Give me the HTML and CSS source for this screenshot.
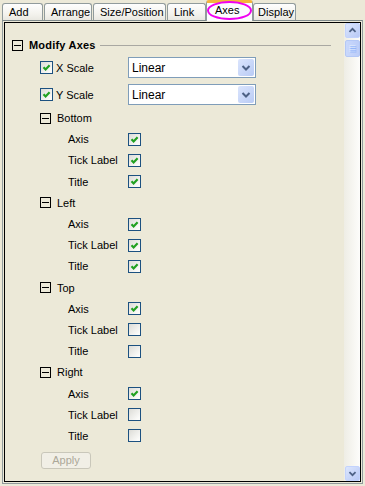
FILE: index.html
```html
<!doctype html>
<html lang="en">
<head>
<meta charset="utf-8">
<title>Modify Axes</title>
<link rel="stylesheet" href="styles.css">
</head>
<body>

<div class="tabs">
  <div class="tab t-add">Add</div>
  <div class="tab t-arrange">Arrange</div>
  <div class="tab t-size">Size/Position</div>
  <div class="tab t-link">Link</div>
  <div class="tab tab-active t-axes">Axes<span class="mark"></span></div>
  <div class="tab t-display">Display</div>
</div>

<div class="panel">
<div class="frame">
  <div class="content">
    <div class="section-head">
      <span class="toggle"></span>
      <span class="section-title">Modify Axes</span>
      <span class="rule"></span>
    </div>

    <div class="scale-row">
      <span class="check on"><svg viewBox="0 0 11 11"><polyline points="2.5,5.2 4.6,7.4 8.6,3.2"/></svg></span>
      <span class="scale-label">X Scale</span>
      <div class="combo"><span class="combo-text">Linear</span><span class="combo-btn"><svg viewBox="0 0 16 17"><polyline points="4.5,7 8,10.5 11.5,7"/></svg></span></div>
    </div>
    <div class="scale-row">
      <span class="check on"><svg viewBox="0 0 11 11"><polyline points="2.5,5.2 4.6,7.4 8.6,3.2"/></svg></span>
      <span class="scale-label">Y Scale</span>
      <div class="combo"><span class="combo-text">Linear</span><span class="combo-btn"><svg viewBox="0 0 16 17"><polyline points="4.5,7 8,10.5 11.5,7"/></svg></span></div>
    </div>

    <div class="tree">
      <div class="row node-head"><span class="toggle"></span>Bottom</div>
      <div class="row item"><span class="label">Axis</span><span class="check on"><svg viewBox="0 0 11 11"><polyline points="2.5,5.2 4.6,7.4 8.6,3.2"/></svg></span></div>
      <div class="row item"><span class="label">Tick Label</span><span class="check on"><svg viewBox="0 0 11 11"><polyline points="2.5,5.2 4.6,7.4 8.6,3.2"/></svg></span></div>
      <div class="row item"><span class="label">Title</span><span class="check on"><svg viewBox="0 0 11 11"><polyline points="2.5,5.2 4.6,7.4 8.6,3.2"/></svg></span></div>

      <div class="row node-head"><span class="toggle"></span>Left</div>
      <div class="row item"><span class="label">Axis</span><span class="check on"><svg viewBox="0 0 11 11"><polyline points="2.5,5.2 4.6,7.4 8.6,3.2"/></svg></span></div>
      <div class="row item"><span class="label">Tick Label</span><span class="check on"><svg viewBox="0 0 11 11"><polyline points="2.5,5.2 4.6,7.4 8.6,3.2"/></svg></span></div>
      <div class="row item"><span class="label">Title</span><span class="check on"><svg viewBox="0 0 11 11"><polyline points="2.5,5.2 4.6,7.4 8.6,3.2"/></svg></span></div>

      <div class="row node-head"><span class="toggle"></span>Top</div>
      <div class="row item"><span class="label">Axis</span><span class="check on"><svg viewBox="0 0 11 11"><polyline points="2.5,5.2 4.6,7.4 8.6,3.2"/></svg></span></div>
      <div class="row item"><span class="label">Tick Label</span><span class="check"></span></div>
      <div class="row item"><span class="label">Title</span><span class="check"></span></div>

      <div class="row node-head"><span class="toggle"></span>Right</div>
      <div class="row item"><span class="label">Axis</span><span class="check on"><svg viewBox="0 0 11 11"><polyline points="2.5,5.2 4.6,7.4 8.6,3.2"/></svg></span></div>
      <div class="row item"><span class="label">Tick Label</span><span class="check"></span></div>
      <div class="row item"><span class="label">Title</span><span class="check"></span></div>
    </div>

    <button class="apply" disabled>Apply</button>
  </div>

  <div class="scrollbar">
    <div class="sb-btn"><svg viewBox="0 0 15 15"><polyline points="4,9 7.5,5.5 11,9"/></svg></div>
    <div class="sb-thumb"><svg viewBox="0 0 15 17"><path class="grip-hi" d="M4 5.5h7M4 7.5h7M4 9.5h7M4 11.5h7"/><path class="grip-lo" d="M5 6.5h7M5 8.5h7M5 10.5h7M5 12.5h7"/></svg></div>
    <div class="sb-track"></div>
    <div class="sb-btn"><svg viewBox="0 0 15 15"><polyline points="4,6 7.5,9.5 11,6"/></svg></div>
  </div>
</div>
</div>

</body>
</html>
```

FILE: styles.css
```css
body {
  margin: 0;
  background: #ece9d8;
  font-family: "Liberation Sans", Arial, sans-serif;
  font-size: 11px;
  color: #000;
}

/* tab strip */
.tabs {
  display: flex;
  align-items: flex-end;
  height: 20px;
  padding-left: 2px;
}
.tab {
  position: relative;
  box-sizing: border-box;
  height: 17px;
  margin-right: 1px;
  padding-left: 6px;
  line-height: 16px;
  border: 1px solid #919b9c;
  border-bottom: none;
  border-radius: 3px 3px 0 0;
  background: linear-gradient(#fefefe, #f4f3ee 60%, #e9e8e1);
  white-space: nowrap;
}
.t-add { width: 41px; }
.t-arrange { width: 48px; }
.t-size { width: 73px; }
.t-link { width: 39px; }
.t-display { width: 43px; padding-left: 4px; }
.tab-active {
  z-index: 2;
  width: 47px;
  height: 21px;
  margin-left: -1px;
  margin-right: 0;
  margin-bottom: -1px;
  padding-left: 8px;
  line-height: 14px;
  border-top: 3px solid #f5b43c;
  background: #fcfcfe;
}
.mark {
  position: absolute;
  left: 0;
  top: -2px;
  width: 45px;
  height: 19px;
  box-sizing: border-box;
  border: 2px solid #f000f0;
  border-radius: 50%;
}

/* panel */
.panel {
  width: 361px;
  box-sizing: border-box;
  margin-left: 2px;
  padding: 1px;
  border: 1px solid #919b9c;
  border-top-color: #7f8a8b;
}
.frame {
  display: flex;
  height: 458px;
  border: 1px solid #000;
}
.content {
  flex: 1;
  padding-top: 16px;
}

.section-head {
  display: flex;
  align-items: center;
  height: 12px;
  padding-left: 7px;
  padding-right: 13px;
}
.toggle {
  position: relative;
  flex: none;
  width: 11px;
  height: 11px;
  box-sizing: border-box;
  border: 1px solid #000;
}
.toggle::after {
  content: "";
  position: absolute;
  left: 1px;
  right: 1px;
  top: 4px;
  height: 1px;
  background: #000;
}
.section-title {
  margin-left: 6px;
  font-weight: bold;
  letter-spacing: 0.2px;
}
.rule {
  flex: 1;
  height: 1px;
  margin-left: 4px;
  background: #a9a8a2;
}

.scale-row {
  display: flex;
  align-items: center;
  height: 21px;
  margin-top: 6px;
  padding-left: 35px;
}
.scale-label {
  width: 72px;
  margin-left: 3px;
}

.check {
  flex: none;
  display: inline-block;
  width: 13px;
  height: 13px;
  box-sizing: border-box;
  border: 1px solid #1c5180;
  background: linear-gradient(135deg, #dcdcd7, #fbfbf9 85%);
}
.check svg {
  display: block;
  width: 11px;
  height: 11px;
}
.check polyline {
  fill: none;
  stroke: #21a121;
  stroke-width: 2.2;
}

.combo {
  display: flex;
  align-items: center;
  justify-content: space-between;
  width: 128px;
  height: 21px;
  box-sizing: border-box;
  border: 1px solid #7f9db9;
  background: #fff;
}
.combo-text {
  padding-left: 3px;
  font-size: 12px;
}
.combo-btn {
  width: 16px;
  height: 17px;
  margin-right: 1px;
  border-radius: 2px;
  background: linear-gradient(135deg, #dbe5fd, #b9cbf5);
}
.combo-btn svg, .sb-btn svg {
  display: block;
  width: 100%;
  height: 100%;
}
.combo-btn polyline, .sb-btn polyline {
  fill: none;
  stroke: #4d6185;
  stroke-width: 2;
}

.tree {
  margin-top: 2.5px;
}
.row {
  display: flex;
  align-items: center;
  height: 21.2px;
}
.node-head {
  padding-left: 35px;
}
.node-head .toggle {
  margin-right: 6px;
}
.item {
  padding-left: 63px;
}
.label {
  width: 60px;
}

.apply {
  display: block;
  width: 50px;
  height: 17px;
  margin: 5px 0 0 36px;
  padding: 0;
  font-family: inherit;
  font-size: 11px;
  color: #aca899;
  background: #f1efe6;
  border: 1px solid #c9c7ba;
  border-radius: 3px;
}

/* scrollbar */
.scrollbar {
  display: flex;
  flex-direction: column;
  width: 16px;
  background: linear-gradient(90deg, #eeede5, #fdfdfb);
}
.sb-btn {
  width: 15px;
  height: 15px;
  margin-left: 1px;
  box-sizing: border-box;
  border: 1px solid #c3d3fd;
  border-radius: 2px;
  background: linear-gradient(135deg, #dce6fe, #b8c9f5);
}
.sb-thumb {
  width: 15px;
  height: 17px;
  margin: 2px 0 0 1px;
  box-sizing: border-box;
  border: 1px solid #b4c8f6;
  border-radius: 2px;
  background: linear-gradient(90deg, #c9d8fc, #bccdf8);
}
.sb-thumb svg {
  display: block;
  width: 13px;
  height: 15px;
}
.grip-hi {
  stroke: #eef4fe;
  stroke-width: 1;
}
.grip-lo {
  stroke: #8cb0f8;
  stroke-width: 1;
}
.sb-track {
  flex: 1;
}
```
